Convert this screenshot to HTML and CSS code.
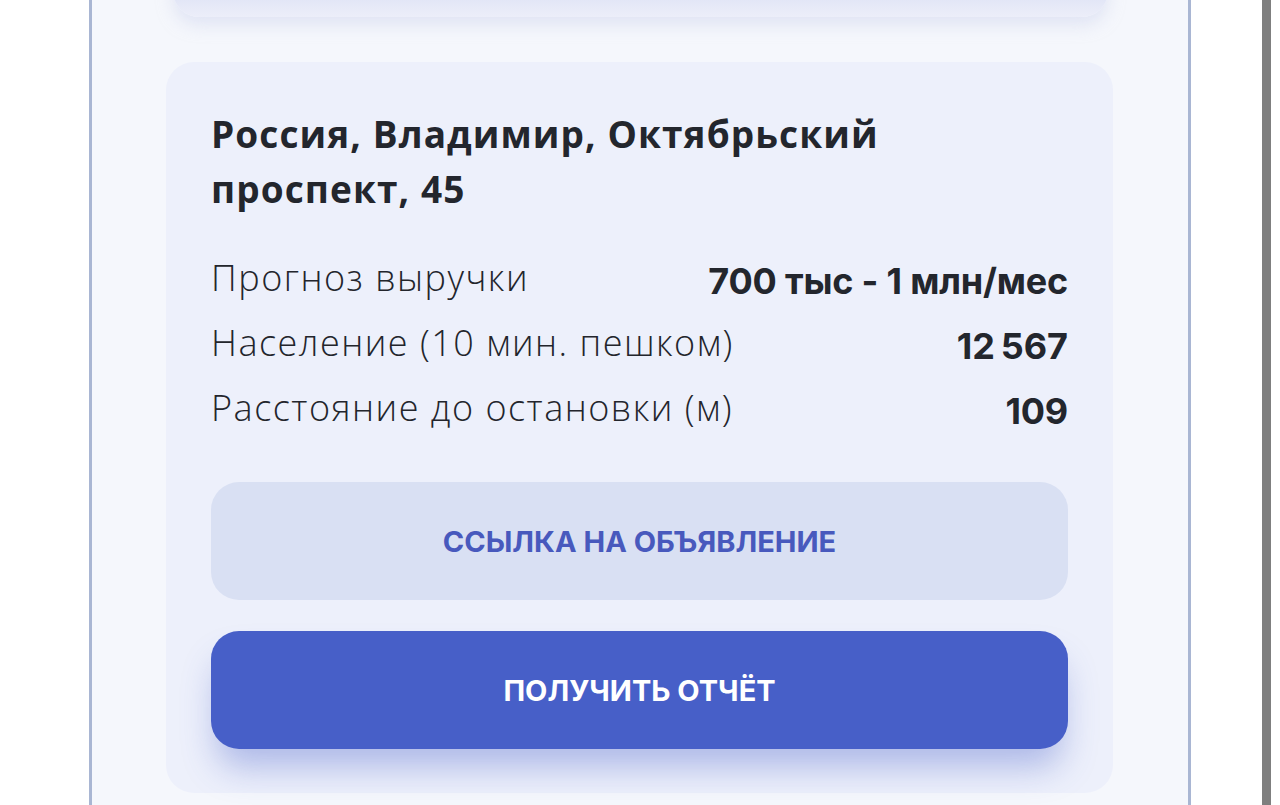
FILE: index.html
```html
<!DOCTYPE html>
<html lang="ru">
<head>
<meta charset="utf-8">
<title>Объявление</title>
<link rel="stylesheet" href="styles.css">
</head>
<body>
<div class="page">
  <div class="frame">
    <div class="prev-card"></div>
    <section class="card">
      <h2 class="address">Россия, Владимир, Октябрьский проспект, 45</h2>
      <ul class="stats">
        <li class="stat"><span class="label">Прогноз выручки</span><span class="value">700 тыс - 1 млн/мес</span></li>
        <li class="stat"><span class="label">Население (10 мин. пешком)</span><span class="value">12&#8239;567</span></li>
        <li class="stat"><span class="label">Расстояние до остановки (м)</span><span class="value">109</span></li>
      </ul>
      <a class="btn btn-light" href="#">ССЫЛКА НА ОБЪЯВЛЕНИЕ</a>
      <a class="btn btn-primary" href="#">ПОЛУЧИТЬ ОТЧЁТ</a>
    </section>
  </div>
  <div class="scrollbar"></div>
</div>
</body>
</html>
```

FILE: styles.css
```css
html, body {
  margin: 0;
  padding: 0;
  background: #ffffff;
  height: 805px;
  overflow: hidden;
}

.page {
  display: flex;
  height: 805px;
}

.frame {
  margin-left: 89px;
  width: 1102px;
  height: 805px;
  border-left: 3px solid #a9b6d3;
  border-right: 3px solid #a9b6d3;
  background: #f5f7fc;
  padding: 0 75px 0 74px;
  box-sizing: border-box;
  display: flex;
  flex-direction: column;
}

.prev-card {
  height: 60px;
  margin: -43px 5px 0 7px;
  border-radius: 0 0 26px 26px;
  background: linear-gradient(to bottom, #d2d9ef 0%, #dde2f5 55%, #eceef9 100%);
  box-shadow: 0 8px 16px rgba(205, 212, 238, 0.5);
}

.card {
  margin-top: 45px;
  background: #edf0fb;
  border-radius: 28px;
  padding: 44px 45px 44px 45px;
  display: flex;
  flex-direction: column;
}

.address {
  margin: 0;
  font-family: "Open Sans", "Liberation Sans", sans-serif;
  font-weight: 700;
  font-size: 37px;
  line-height: 55px;
  color: #23262d;
  max-width: 760px;
  letter-spacing: 1.1px;
}

.stats {
  list-style: none;
  margin: 29px 0 0 0;
  padding: 0;
}

.stat {
  display: flex;
  justify-content: space-between;
  align-items: baseline;
  height: 65px;
  line-height: 65px;
}

.label {
  font-family: "Open Sans", "Lato", sans-serif;
  font-weight: 300;
  font-size: 36px;
  color: #23252c;
  letter-spacing: 1.5px;
}

.value {
  font-family: "Inter", "Liberation Sans", sans-serif;
  font-weight: 700;
  font-size: 36px;
  color: #23262d;
  letter-spacing: -0.2px;
  position: relative;
  top: 3px;
}

.btn {
  display: flex;
  align-items: center;
  justify-content: center;
  height: 118px;
  border-radius: 28px;
  text-decoration: none;
  font-family: "Inter", "Liberation Sans", sans-serif;
  font-weight: 700;
  font-size: 29px;
}

.btn-light {
  margin-top: 42px;
  background: #d9e0f3;
  color: #4859bd;
}

.btn-primary {
  margin-top: 31px;
  background: #475fc8;
  color: #ffffff;
  box-shadow: 0 24px 34px -6px rgba(71, 95, 200, 0.38);
}

.scrollbar {
  margin-left: 71px;
  width: 9px;
  height: 805px;
  background: #7f7f7f;
}
```
